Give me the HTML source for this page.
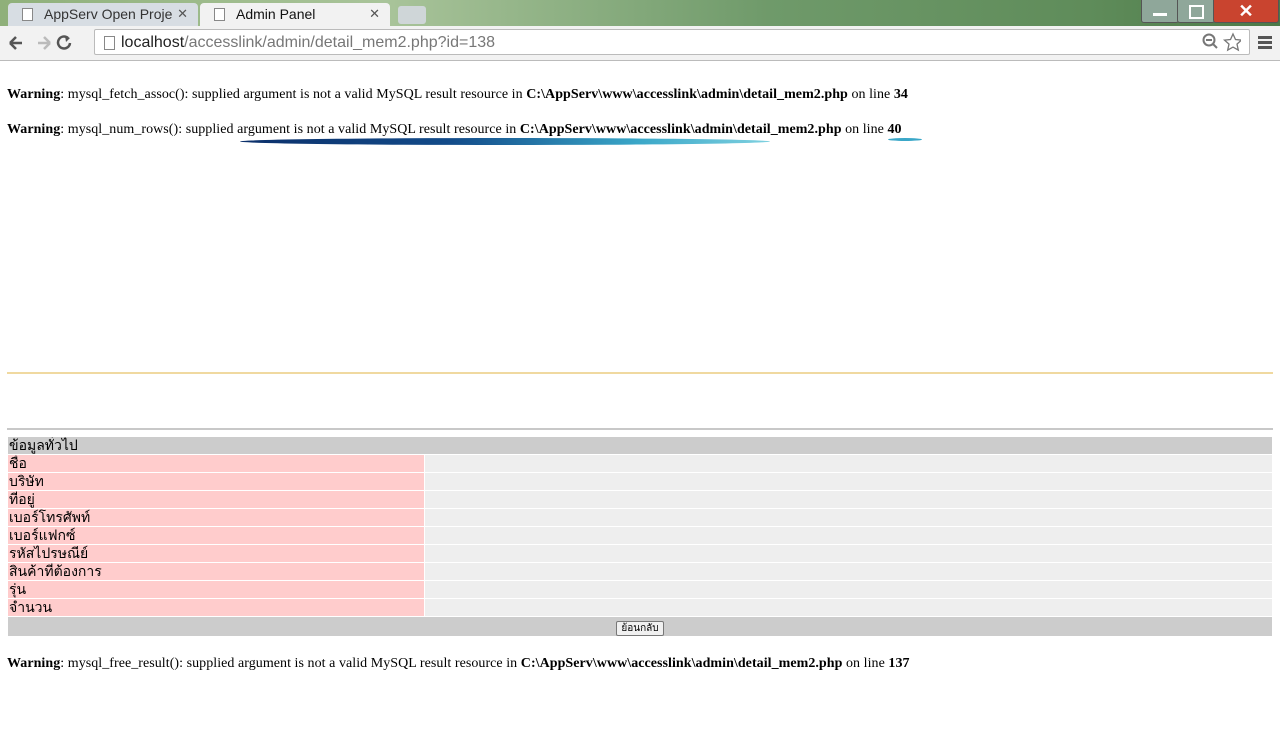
<!DOCTYPE html>
<html><head><meta charset="utf-8"><style>
body{margin:0;width:1280px;height:752px;overflow:hidden;background:#fff;font-family:"Liberation Serif",serif;position:relative}
.frame{position:absolute;left:0;top:0;width:1280px;height:26px;background:linear-gradient(90deg,#8fb07a,#a9c49a 30%,#6f9a6a 60%,#5f8c5a 85%,#4c7a48)}
.tab{position:absolute;top:3px;height:23px;font:14px "Liberation Sans",sans-serif;color:#333;line-height:22px;padding-left:36px;box-sizing:border-box}
.t1{left:8px;width:190px;background:#d7dde3;border-radius:4px 4px 0 0}
.t2{left:200px;width:190px;background:#f2f2f2;border-radius:4px 4px 0 0;color:#111}
.tab .x{position:absolute;right:10px;top:0;font-size:13px;color:#555}
.tab .doc{position:absolute;left:14px;top:5px;width:9px;height:11px;border:1px solid #888;background:#fff}
.t3{position:absolute;left:398px;top:6px;width:28px;height:18px;background:#cfd6d8;border-radius:3px}
.toolbar{position:absolute;left:0;top:26px;width:1280px;height:34px;background:#f2f2f2;border-bottom:1px solid #bbb}
.url{position:absolute;left:94px;top:3px;width:1156px;height:26px;background:#fff;border:1px solid #bbb;border-radius:2px;font:16px "Liberation Sans",sans-serif;line-height:26px;color:#777;padding-left:26px;box-sizing:border-box}
.url b{font-weight:normal;color:#222}
.wb{position:absolute;top:0;height:22px;border:1px solid #555;border-top:none;border-radius:0 0 3px 3px}
.p{position:absolute;left:7px;font-size:14px;letter-spacing:0.05px;color:#000;white-space:nowrap}
table{position:absolute;left:7px;top:436px;width:1266px;border-collapse:separate;border-spacing:1px;font:14px "Liberation Sans","Noto Sans CJK SC",sans-serif}
td{padding:0 1px;height:17px;line-height:17px;overflow:hidden}
.h{background:#ccc}
.l{background:#fcc;width:414px}
.r{background:#eee}
</style></head><body>
<div class="frame"></div>
<div class="tab t1"><span class="doc"></span>AppServ Open Proje<span class="x">✕</span></div>
<div class="tab t2"><span class="doc"></span>Admin Panel<span class="x">✕</span></div>
<div class="t3"></div>
<div class="wb" style="left:1141px;width:36px;background:#8fa79a"><div style="position:absolute;left:11px;top:13px;width:14px;height:3px;background:#fff"></div></div>
<div class="wb" style="left:1177px;width:36px;background:#8fa79a"><div style="position:absolute;left:11px;top:5px;width:11px;height:10px;border:2px solid #fff"></div></div>
<div class="wb" style="left:1213px;width:64px;background:#c9442f;color:#fff;font:bold 18px 'Liberation Sans',sans-serif;text-align:center;line-height:22px">✕</div>
<div class="toolbar">
<svg style="position:absolute;left:8px;top:9px" width="70" height="16"><path d="M2 8h12M2 8l6-6M2 8l6 6" stroke="#555" stroke-width="2.5" fill="none"/><path d="M30 8h12M42 8l-6-6M42 8l-6 6" stroke="#bbb" stroke-width="2.5" fill="none"/><path d="M72 3a6 6 0 1 0 2 5" stroke="#555" stroke-width="2.5" fill="none" transform="translate(-12 0)"/><path d="M58 1l5 2-4 4z" fill="#555" transform="translate(-1 0)"/></svg>
<div class="url"><span style="position:absolute;left:9px;top:6px;width:9px;height:12px;border:1px solid #888"></span><b>localhost</b>/accesslink/admin/detail_mem2.php?id=138</div>
<svg style="position:absolute;left:1201px;top:6px" width="40" height="20"><circle cx="8" cy="8" r="5.5" stroke="#777" stroke-width="2" fill="none"/><path d="M12 12l4 4M5 8h6" stroke="#777" stroke-width="2"/><path d="M32 2l2.5 5.5 6 .6-4.5 4 1.3 6-5.3-3-5.3 3 1.3-6-4.5-4 6-.6z" stroke="#777" stroke-width="1.3" fill="none"/></svg>
<div style="position:absolute;left:1258px;top:10px;width:14px;height:3px;background:#555;box-shadow:0 5px 0 #555,0 10px 0 #555"></div>
</div>
<div class="p" style="top:87px"><b>Warning</b>: mysql_fetch_assoc(): supplied argument is not a valid MySQL result resource in <b>C:\AppServ\www\accesslink\admin\detail_mem2.php</b> on line <b>34</b></div>
<div class="p" style="top:122px"><b>Warning</b>: mysql_num_rows(): supplied argument is not a valid MySQL result resource in <b>C:\AppServ\www\accesslink\admin\detail_mem2.php</b> on line <b>40</b></div>
<div style="position:absolute;left:240px;top:138px;width:530px;height:7px;border-radius:50%;background:linear-gradient(90deg,#0b2f6a,#134c8a 40%,#3aa7c8 75%,#7fd1e0)"></div>
<div style="position:absolute;left:888px;top:138px;width:34px;height:3px;background:#3aa7c8;border-radius:50%"></div>
<div style="position:absolute;left:7px;top:372px;width:1266px;height:2px;background:#f0d9a0"></div>
<div style="position:absolute;left:7px;top:428px;width:1266px;height:2px;background:#c8c8c8"></div>
<table>
<tr><td class="h" colspan="2">ข้อมูลทั่วไป</td></tr>
<tr><td class="l">ชื่อ</td><td class="r"></td></tr>
<tr><td class="l">บริษัท</td><td class="r"></td></tr>
<tr><td class="l">ที่อยู่</td><td class="r"></td></tr>
<tr><td class="l">เบอร์โทรศัพท์</td><td class="r"></td></tr>
<tr><td class="l">เบอร์แฟกซ์</td><td class="r"></td></tr>
<tr><td class="l">รหัสไปรษณีย์</td><td class="r"></td></tr>
<tr><td class="l">สินค้าที่ต้องการ</td><td class="r"></td></tr>
<tr><td class="l">รุ่น</td><td class="r"></td></tr>
<tr><td class="l">จำนวน</td><td class="r"></td></tr>
<tr><td class="h" colspan="2" style="height:19px;text-align:center"><span style="display:inline-block;border:1px solid #777;border-radius:2px;background:#f0f0f0;font-size:10px;line-height:13px;padding:0 4px">ย้อนกลับ</span></td></tr>
</table>
<div class="p" style="top:656px"><b>Warning</b>: mysql_free_result(): supplied argument is not a valid MySQL result resource in <b>C:\AppServ\www\accesslink\admin\detail_mem2.php</b> on line <b>137</b></div>
</body></html>
